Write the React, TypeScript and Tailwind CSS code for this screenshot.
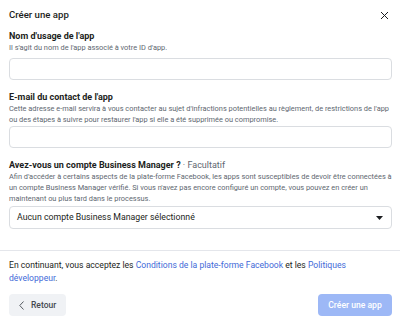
import React from "react";

export default function App() {
  const font = { fontFamily: "Roboto, 'Liberation Sans', sans-serif" };
  return (
    <div className="w-[400px] h-[319px] bg-white overflow-hidden text-[#1c1e21]" style={font}>
      <div className="flex items-center justify-between pl-[9px] pr-[11px] pt-[9px] h-[21px]">
        <div className="text-[9.6px] leading-[12px] font-medium">Créer une app</div>
        <svg width="9" height="9" viewBox="0 0 9 9" className="mt-[1px]">
          <path d="M1 1L8 8M8 1L1 8" stroke="#1c1e21" strokeWidth="1" fill="none" />
        </svg>
      </div>

      <div className="pl-[9px] pr-[8px]">
        <div className="mt-[9px] text-[9px] leading-[12px] font-bold">Nom d'usage de l'app</div>
        <div className="text-[7.4px] leading-[11px] text-[#606770]">Il s'agit du nom de l'app associé à votre ID d'app.</div>
        <div className="mt-[5px] h-[22px] border border-[#dadde1] rounded-[4px]"></div>

        <div className="mt-[11px] text-[9px] leading-[12px] font-bold">E-mail du contact de l'app</div>
        <div className="text-[7.4px] leading-[11px] text-[#606770]">
          Cette adresse e-mail servira à vous contacter au sujet d'infractions potentielles au règlement, de restrictions de l'app ou des étapes à suivre pour restaurer l'app si elle a été supprimée ou compromise.
        </div>
        <div className="mt-[1px] h-[22px] border border-[#dadde1] rounded-[4px]"></div>

        <div className="mt-[11px] text-[9px] leading-[12px]">
          <span className="font-bold">Avez-vous un compte Business Manager ?</span>
          <span className="text-[#606770]"> · Facultatif</span>
        </div>
        <div className="text-[7.4px] leading-[11px] text-[#606770]">
          Afin d'accéder à certains aspects de la plate-forme Facebook, les apps sont susceptibles de devoir être connectées à un compte Business Manager vérifié. Si vous n'avez pas encore configuré un compte, vous pouvez en créer un maintenant ou plus tard dans le processus.
        </div>
        <div className="mt-[2px] h-[23px] border border-[#dadde1] rounded-[4px] flex items-center justify-between pl-[7px] pr-[8px]">
          <span className="text-[8.75px]">Aucun compte Business Manager sélectionné</span>
          <svg width="7" height="4" viewBox="0 0 7 4">
            <path d="M0 0H7L3.5 4Z" fill="#1c1e21" />
          </svg>
        </div>
      </div>

      <div className="mt-[21px] border-t border-[#e4e6eb]"></div>

      <div className="pl-[9px] pr-[8px]">
        <div className="mt-[8px] text-[8.6px] leading-[13px]">
          En continuant, vous acceptez les <span className="text-[#3f6ad8]">Conditions de la plate-forme Facebook</span> et les <span className="text-[#3f6ad8]">Politiques développeur</span>.
        </div>
        <div className="mt-[9px] flex justify-between">
          <div className="h-[22px] w-[57px] rounded-[4px] bg-[#f0f2f5] flex items-center pl-[10px] gap-[7px]">
            <svg width="5" height="9" viewBox="0 0 5 9">
              <path d="M4.5 0.5L0.8 4.5L4.5 8.5" stroke="#444950" strokeWidth="0.9" fill="none" />
            </svg>
            <span className="text-[8.5px] font-medium text-[#444950]">Retour</span>
          </div>
          <div className="h-[22px] w-[74px] rounded-[4px] bg-[#9db8f6] flex items-center justify-center">
            <span className="text-[8.6px] font-medium text-white">Créer une app</span>
          </div>
        </div>
      </div>
    </div>
  );
}
